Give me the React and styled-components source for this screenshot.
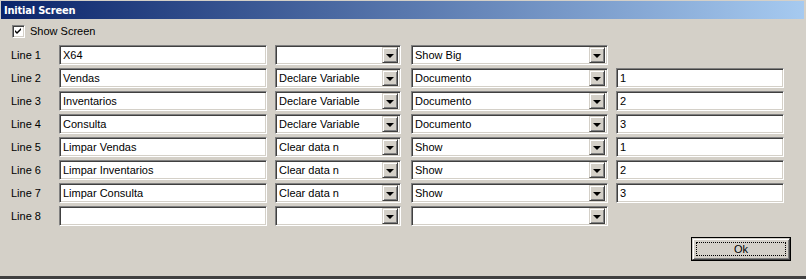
import React from 'react';
import styled, { createGlobalStyle, css } from 'styled-components';

const GlobalStyle = createGlobalStyle`
	html, body {
		margin: 0;
		padding: 0;
		background: #d4d0c8;
	}
	body {
		font-family: "Liberation Sans", Arial, sans-serif;
		font-size: 11px;
		color: #000;
	}
`;

const sunken = css`
	box-sizing: border-box;
	border: 1px solid;
	border-color: #808080 #ffffff #ffffff #808080;
	box-shadow: inset 1px 1px 0 #404040, inset -1px -1px 0 #d4d0c8;
	background: #fff;
`;

const raised = css`
	box-sizing: border-box;
	border: 1px solid;
	border-color: #d4d0c8 #404040 #404040 #d4d0c8;
	box-shadow: inset 1px 1px 0 #ffffff, inset -1px -1px 0 #808080;
	background: #d4d0c8;
`;

const Window = styled.div`
	width: 806px;
	height: 279px;
	box-sizing: border-box;
	padding: 1px 2px 0 1px;
	border-bottom: 3px solid #404040;
	background: #d4d0c8;
	display: flex;
	flex-direction: column;
`;

const TitleBar = styled.div`
	height: 18px;
	display: flex;
	align-items: center;
	padding-left: 3px;
	background: linear-gradient(to right, #0a246a, #a6caf0);
	color: #fff;
	font-family: "DejaVu Sans Condensed", "Liberation Sans", sans-serif;
	font-weight: bold;
	font-size: 11px;
	letter-spacing: -0.2px;
`;

const Body = styled.div`
	flex: 1;
	display: flex;
	flex-direction: column;
	padding: 4px 0 0 9px;
`;

const CheckRow = styled.label`
	display: flex;
	align-items: center;
	gap: 5px;
	height: 14px;
	padding-left: 2px;
	margin-top: 1px;
`;

const CheckBox = styled.span`
	${sunken};
	width: 13px;
	height: 13px;
	display: flex;
	align-items: center;
	justify-content: center;
`;

const Grid = styled.div`
	display: grid;
	grid-template-columns: 41px 208px 126px 199px 168px;
	column-gap: 8px;
	row-gap: 3px;
	margin-top: 7px;
`;

const Label = styled.div`
	height: 20px;
	display: flex;
	align-items: center;
	padding-left: 1px;
`;

const TextField = styled.div`
	${sunken};
	height: 20px;
	display: flex;
	align-items: center;
	padding: 0 3px;
	white-space: nowrap;
	overflow: hidden;
`;

const Combo = styled.div`
	${sunken};
	height: 20px;
	display: flex;
	align-items: center;
	padding: 2px 2px 2px 3px;
	margin-left: ${p => p.$shift || 0}px;
`;

const ComboText = styled.span`
	flex: 1;
	white-space: nowrap;
	overflow: hidden;
`;

const DropButton = styled.span`
	${raised};
	width: 16px;
	height: 16px;
	display: flex;
	align-items: center;
	justify-content: center;
`;

const Arrow = styled.span`
	width: 0;
	height: 0;
	border-left: 4px solid transparent;
	border-right: 4px solid transparent;
	border-top: 4px solid #000;
	margin-top: 1px;
`;

const Footer = styled.div`
	display: flex;
	justify-content: flex-end;
	padding-right: 13px;
	margin-top: 11px;
`;

const OkButton = styled.button`
	width: 100px;
	height: 24px;
	box-sizing: border-box;
	border: 1px solid #000;
	padding: 0;
	background: #d4d0c8;
	font-family: "Liberation Sans", Arial, sans-serif;
	font-size: 11px;
	color: #000;
	display: flex;
	align-items: stretch;
`;

const OkInner = styled.span`
	${raised};
	flex: 1;
	padding: 3px;
	display: flex;
`;

const Focus = styled.span`
	flex: 1;
	border: 1px dotted #000;
	display: flex;
	align-items: center;
	justify-content: center;
`;

const rows = [
	['X64', '', 'Show Big', null],
	['Vendas', 'Declare Variable', 'Documento', '1'],
	['Inventarios', 'Declare Variable', 'Documento', '2'],
	['Consulta', 'Declare Variable', 'Documento', '3'],
	['Limpar Vendas', 'Clear data n', 'Show', '1'],
	['Limpar Inventarios', 'Clear data n', 'Show', '2'],
	['Limpar Consulta', 'Clear data n', 'Show', '3'],
	['', '', '', null],
];

const ComboBox = ({ value, shift }) => (
	<Combo $shift={shift}>
		<ComboText>{value}</ComboText>
		<DropButton>
			<Arrow />
		</DropButton>
	</Combo>
);

const App = () => {
	return (
		<>
			<GlobalStyle />
			<Window>
				<TitleBar>Initial Screen</TitleBar>
				<Body>
					<CheckRow>
						<CheckBox>
							<svg width="7" height="7" viewBox="0 0 7 7">
								<path d="M0 2 L2 4 L6 0 L6 2 L2 6 L0 4 Z" fill="#000" />
							</svg>
						</CheckBox>
						<span>Show Screen</span>
					</CheckRow>
					<Grid>
						{rows.map((r, i) => (
							<React.Fragment key={i}>
								<Label>{`Line ${i + 1}`}</Label>
								<TextField>{r[0]}</TextField>
								<ComboBox value={r[1]} />
								<ComboBox value={r[2]} shift={2} />
								{r[3] !== null ? <TextField>{r[3]}</TextField> : <div />}
							</React.Fragment>
						))}
					</Grid>
					<Footer>
						<OkButton>
							<OkInner>
								<Focus>Ok</Focus>
							</OkInner>
						</OkButton>
					</Footer>
				</Body>
			</Window>
		</>
	);
};

export default App;
